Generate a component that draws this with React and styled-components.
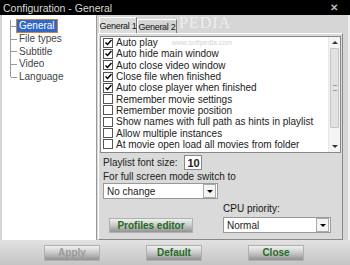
import React, { useState } from 'react';
import styled, { createGlobalStyle } from 'styled-components';

const GlobalStyle = createGlobalStyle`
  html, body { margin: 0; padding: 0; background: #d6d6d6; }
  body { font-family: "Liberation Sans", Arial, sans-serif; font-size: 10px; color: #111; }
`

const Window = styled.div`
  width: 350px;
  height: 265px;
  display: flex;
  flex-direction: column;
  background: #d6d6d6;
  overflow: hidden;
`

const TitleBar = styled.div`
  height: 15px;
  background: #000;
  color: #d8d8d8;
  font-size: 10.5px;
  display: flex;
  align-items: center;
  justify-content: space-between;
  padding: 0 12px 0 3px;
`

const CloseX = styled.span`
  font-size: 10px;
  font-weight: bold;
  color: #bbb;
`

const Body = styled.div`
  flex: 1;
  display: flex;
  padding: 0 5px 0 2px;
  border-right: 2px solid #f0f0f0;
`

const Tree = styled.div`
  width: 95px;
  background: #fff;
  border-right: 1px solid #999;
  padding: 5px 0 0 8px;
  box-sizing: border-box;
`

const TreeList = styled.div`
  border-left: 1px solid #999;
  height: 57px;
`

const TreeItem = styled.div`
  display: flex;
  align-items: center;
  height: 12.7px;
  font-size: 10px;
  &::before {
    content: '';
    width: 6px;
    border-top: 1px solid #999;
  }
`

const TreeLabel = styled.span`
  height: 12px;
  line-height: 12px;
  padding: 0 2px;
  background: ${(p) => (p.selected ? '#3168c5' : 'transparent')};
  color: ${(p) => (p.selected ? '#fff' : '#444')};
  outline: ${(p) => (p.selected ? '1px solid #c8824a' : 'none')};
`

const Right = styled.div`
  flex: 1;
  display: flex;
  flex-direction: column;
  padding-left: 1px;
`

const TabStrip = styled.div`
  height: 18px;
  display: flex;
  align-items: flex-end;
`

const Tab = styled.div`
  height: ${(p) => (p.active ? '16px' : '14px')};
  width: ${(p) => p.w}px;
  display: flex;
  align-items: center;
  justify-content: center;
  white-space: nowrap;
  font-size: 9px;
  letter-spacing: -0.3px;
  background: ${(p) => (p.active ? '#dcdcdc' : '#d4d4d4')};
  border: 1px solid #fff;
  border-right-color: #777;
  border-bottom: none;
  box-sizing: border-box;
  margin-left: ${(p) => (p.active ? '1px' : '0')};
`

const Watermark = styled.span`
  margin: 0 0 1px 2px;
  font-family: "Liberation Serif", serif;
  font-size: 16px;
  color: rgba(255, 255, 255, 0.6);
  letter-spacing: 1px;
`

const Panel = styled.div`
  flex: 1;
  background: #dadada;
  border: 1px solid #fff;
  border-right-color: #888;
  border-bottom-color: #888;
  padding: 2px 1px 0 1px;
  display: flex;
  flex-direction: column;
`

const CheckList = styled.div`
  height: 115px;
  background: #fff;
  border: 1px solid #888;
  display: flex;
`

const Items = styled.div`
  flex: 1;
  padding: 0 0 0 2px;
`

const Item = styled.div`
  display: flex;
  align-items: center;
  height: 11.3px;
  font-size: 10px;
  color: #222;
  white-space: nowrap;
`

const Faint = styled.span`
  margin-left: 14px;
  font-size: 7px;
  color: #d4d4d4;
`

const Box = styled.span`
  width: 8px;
  height: 8px;
  border: 1px solid #555;
  margin-right: 3px;
  display: flex;
  align-items: center;
  justify-content: center;
  background: #fff;
`

const ScrollBar = styled.div`
  width: 11px;
  border-left: 1px solid #e8e8e8;
  background: #f4f4f4;
  display: flex;
  flex-direction: column;
  justify-content: space-between;
`

const ScrollBtn = styled.div`
  height: 11px;
  display: flex;
  align-items: center;
  justify-content: center;
  &::after {
    content: '';
    border-left: 3px solid transparent;
    border-right: 3px solid transparent;
    ${(p) => (p.up ? 'border-bottom: 3px solid #333;' : 'border-top: 3px solid #333;')}
  }
`

const Thumb = styled.div`
  height: 78px;
  margin: 0 1px;
  background: #e2e2e2;
  border: 1px solid #c4c4c4;
  border-radius: 1px;
  display: flex;
  align-items: center;
  justify-content: center;
  &::after {
    content: '';
    width: 4px;
    height: 4px;
    border-top: 1px solid #999;
    border-bottom: 1px solid #999;
  }
`

const Row = styled.div`
  display: flex;
  align-items: center;
  gap: ${(p) => p.gap || 0}px;
  margin-top: ${(p) => p.mt || 0}px;
  padding-left: 3px;
  font-size: 10px;
  color: #222;
`

const NumBox = styled.div`
  width: 18px;
  height: 15px;
  border: 1px solid #888;
  background: #fff;
  font-weight: bold;
  font-size: 11px;
  display: flex;
  align-items: center;
  padding-left: 2px;
  box-sizing: border-box;
`

const Select = styled.div`
  width: ${(p) => p.w}px;
  height: 16px;
  border: 1px solid #999;
  background: #fff;
  display: flex;
  align-items: center;
  justify-content: space-between;
  font-size: 10px;
  color: #222;
  padding-left: 3px;
  box-sizing: border-box;
`

const Arrow = styled.span`
  width: 11px;
  height: 12px;
  margin-right: 1px;
  border: 1px solid #aaa;
  background: #f4f4f4;
  display: flex;
  align-items: center;
  justify-content: center;
  &::after {
    content: '';
    border-left: 3px solid transparent;
    border-right: 3px solid transparent;
    border-top: 3px solid #000;
  }
`

const Lower = styled.div`
  display: flex;
  justify-content: space-between;
  align-items: flex-end;
  margin-top: 4px;
  padding: 0 10px 0 9px;
`

const Col = styled.div`
  display: flex;
  flex-direction: column;
  gap: 3px;
`

const Button = styled.button`
  width: ${(p) => p.w || 56}px;
  height: ${(p) => p.h || 16}px;
  border: none;
  padding: 0;
  font-family: inherit;
  font-size: 10px;
  font-weight: bold;
  color: ${(p) => (p.disabled ? '#9a9a9a' : '#1f6b1f')};
  background: linear-gradient(#f6f6f6 0%, #cdcdcd 45%, #8a8a8a 100%);
  box-shadow: inset 0 0 0 1px #b0b0b0;
`

const Footer = styled.div`
  height: 25px;
  display: flex;
  align-items: center;
  justify-content: center;
  gap: 46px;
  background: linear-gradient(#e2e2e2, #c4c4c4);
  padding-right: 2px;
`

const options = [
  ['Auto play', true],
  ['Auto hide main window', true],
  ['Auto close video window', true],
  ['Close file when finished', true],
  ['Auto close player when finished', true],
  ['Remember movie settings', false],
  ['Remember movie position', false],
  ['Show names with full path as hints in playlist', false],
  ['Allow multiple instances', false],
  ['At movie open load all movies from folder', false],
]

const tree = ['General', 'File types', 'Subtitle', 'Video', 'Language']

export default function App() {
  const [checks] = useState(options)
  return (
    <Window>
      <GlobalStyle />
      <TitleBar>
        <span>Configuration - General</span>
        <CloseX>✕</CloseX>
      </TitleBar>
      <Body>
        <Tree>
          <TreeList>
            {tree.map((t, i) => (
              <TreeItem key={t}>
                <TreeLabel selected={i === 0}>{t}</TreeLabel>
              </TreeItem>
            ))}
          </TreeList>
        </Tree>
        <Right>
          <TabStrip>
            <Tab active w={38}>General 1</Tab>
            <Tab w={40}>General 2</Tab>
            <Watermark>PEDIA</Watermark>
          </TabStrip>
          <Panel>
            <CheckList>
              <Items>
                {checks.map(([label, on], i) => (
                  <Item key={label}>
                    <Box>
                      {on && (
                        <svg width="7" height="7" viewBox="0 0 7 7">
                          <path d="M0.5 3.5 L2.5 5.5 L6.5 1" stroke="#000" strokeWidth="1.5" fill="none" />
                        </svg>
                      )}
                    </Box>
                    {label}
                    {i === 0 && <Faint>www.softpedia.com</Faint>}
                  </Item>
                ))}
              </Items>
              <ScrollBar>
                <ScrollBtn up />
                <Thumb />
                <div style={{ flex: 1 }} />
                <ScrollBtn />
              </ScrollBar>
            </CheckList>
            <Row gap={7} mt={2}>
              Playlist font size:
              <NumBox>10</NumBox>
            </Row>
            <Row mt={1}>For full screen mode switch to</Row>
            <Row mt={1}>
              <Select w={115}>
                No change
                <Arrow />
              </Select>
            </Row>
            <Lower>
              <Button w={84} h={15}>Profiles editor</Button>
              <Col>
                <span>CPU priority:</span>
                <Select w={108}>
                  Normal
                  <Arrow />
                </Select>
              </Col>
            </Lower>
          </Panel>
        </Right>
      </Body>
      <Footer>
        <Button disabled>Apply</Button>
        <Button>Default</Button>
        <Button>Close</Button>
      </Footer>
    </Window>
  );
}
